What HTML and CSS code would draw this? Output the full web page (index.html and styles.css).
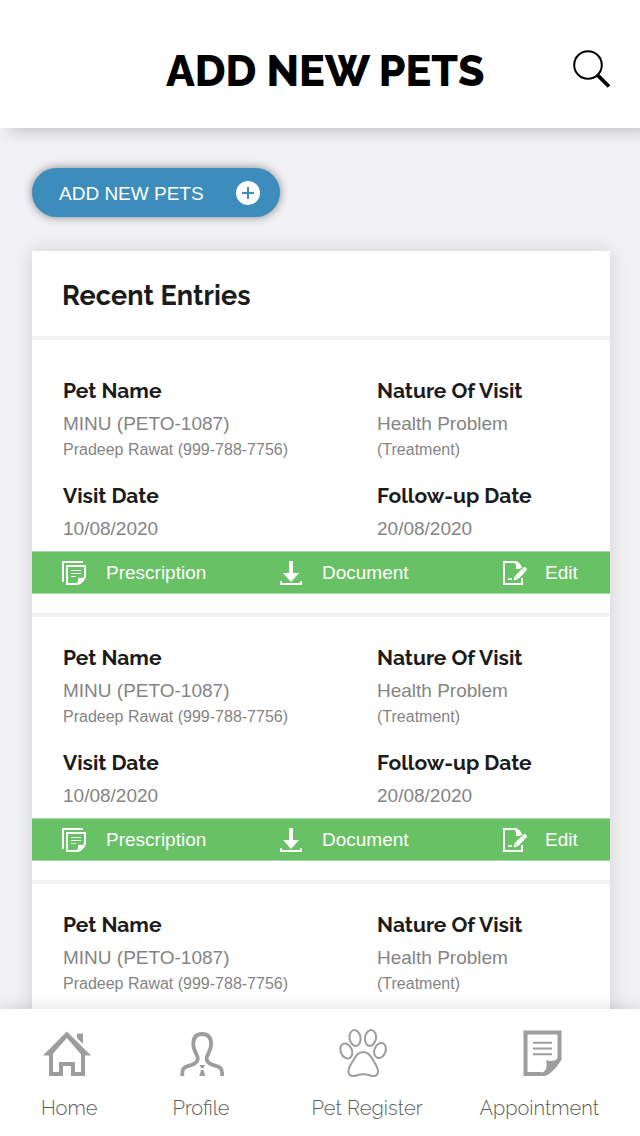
FILE: index.html
```html
<!DOCTYPE html>
<html lang="en">
<head>
<meta charset="utf-8">
<title>Add New Pets</title>
<link rel="stylesheet" href="styles.css">
</head>
<body>
<svg class="defs" width="0" height="0" aria-hidden="true">
  <symbol id="prescription" viewBox="0 0 24 24">
    <path d="M1 21V1h20" fill="none" stroke="currentColor" stroke-width="2"/>
    <path d="M23 17V5H5v18h11" fill="none" stroke="currentColor" stroke-width="2"/>
    <path d="M9 9.500h10M9 12.500h10M9 15.500h5" stroke="currentColor" stroke-width="1"/>
    <path d="M24 16c-1.500 4-4 6.500-8 8h-2v-2c2 0 2.500-2.500 2-5.500 2.500 1 4.500.5 6-.5z" fill="currentColor"/>
  </symbol>
  <symbol id="download" viewBox="0 0 22 24">
    <path d="M9 0h4v12h6l-8 9-8-9h6z" fill="currentColor"/>
    <path d="M1 20v3h20v-3" fill="none" stroke="currentColor" stroke-width="2"/>
  </symbol>
  <symbol id="edit" viewBox="0 0 24 24">
    <path d="M12 1H1v22h18v-6" fill="none" stroke="currentColor" stroke-width="2"/>
    <path d="M11 0h2c3 1 5.500 4 6 7-2 1-4 1-6 1 .5-3 0-5-2-6.500z" fill="currentColor"/>
    <path d="M21.500 6L24 8.500l-2 2L19.500 8zM18.700 8.700l2.700 2.700-6 6-2.700-2.700zM12 15.500l2.500 2.500-3.500 1z" fill="currentColor" stroke="currentColor" stroke-width=".9"/>
    <path d="M5 18h4" stroke="currentColor" stroke-width="1.600"/>
  </symbol>
</svg>
<div class="screen">
  <header class="header">
    <h1 class="title"><span>ADD NEW PETS</span></h1>
    <svg class="search" viewBox="0 0 38 38" width="38" height="38">
      <circle cx="15" cy="15" r="13.800" fill="none" stroke="#000" stroke-width="2"/>
      <path d="M24.500 25L36 36.500" stroke="#000" stroke-width="3.800"/>
    </svg>
  </header>
  <main class="main">
    <button class="add"><span>ADD NEW PETS</span>
      <svg viewBox="0 0 24 24" width="24" height="24"><circle cx="12" cy="12" r="12" fill="#fff"/><path d="M12 6v12M6 12h12" stroke="#3d8dbc" stroke-width="2"/></svg>
    </button>
    <section class="card">
      <h2 class="card-title"><span>Recent Entries</span></h2>
      <article class="entry">
        <div class="fields">
          <div class="col left">
            <h3>Pet Name</h3><p class="value">MINU (PETO-1087)</p><p class="small">Pradeep Rawat (999-788-7756)</p>
            <h3 class="second">Visit Date</h3><p class="value">10/08/2020</p>
          </div>
          <div class="col">
            <h3>Nature Of Visit</h3><p class="value">Health Problem</p><p class="small">(Treatment)</p>
            <h3 class="second">Follow-up Date</h3><p class="value">20/08/2020</p>
          </div>
        </div>
        <div class="actions">
          <a class="act a1"><svg width="24" height="24"><use href="#prescription"/></svg><span>Prescription</span></a>
          <a class="act a2"><svg width="22" height="24"><use href="#download"/></svg><span>Document</span></a>
          <a class="act a3"><svg width="24" height="24"><use href="#edit"/></svg><span>Edit</span></a>
        </div>
      </article>
      <article class="entry">
        <div class="fields">
          <div class="col left">
            <h3>Pet Name</h3><p class="value">MINU (PETO-1087)</p><p class="small">Pradeep Rawat (999-788-7756)</p>
            <h3 class="second">Visit Date</h3><p class="value">10/08/2020</p>
          </div>
          <div class="col">
            <h3>Nature Of Visit</h3><p class="value">Health Problem</p><p class="small">(Treatment)</p>
            <h3 class="second">Follow-up Date</h3><p class="value">20/08/2020</p>
          </div>
        </div>
        <div class="actions">
          <a class="act a1"><svg width="24" height="24"><use href="#prescription"/></svg><span>Prescription</span></a>
          <a class="act a2"><svg width="22" height="24"><use href="#download"/></svg><span>Document</span></a>
          <a class="act a3"><svg width="24" height="24"><use href="#edit"/></svg><span>Edit</span></a>
        </div>
      </article>
      <article class="entry">
        <div class="fields">
          <div class="col left">
            <h3>Pet Name</h3><p class="value">MINU (PETO-1087)</p><p class="small">Pradeep Rawat (999-788-7756)</p>
          </div>
          <div class="col">
            <h3>Nature Of Visit</h3><p class="value">Health Problem</p><p class="small">(Treatment)</p>
          </div>
        </div>
      </article>
    </section>
  </main>
  <nav class="nav">
    <a class="tab t1">
      <svg viewBox="0 0 48 48" width="48" height="48" fill="none" stroke="#9d9d9d" stroke-width="4">
        <path d="M8 22v22h10V34h12v10h10V22"/>
        <path d="M23.800 1.500L48 25.500h-9L23.800 8 8.500 25.500H0z" fill="#9d9d9d" stroke="none"/>
        <path d="M34 3.500h6V14l-6-6z" fill="#9d9d9d" stroke="none"/>
      </svg><span>Home</span></a>
    <a class="tab t2">
      <svg viewBox="0 0 48 48" width="48" height="48" fill="none" stroke="#9d9d9d" stroke-width="3.800">
        <path d="M5.300 46v-3c0-4.500 2-6 7-7.300 5-1.300 8.500-3 8.500-7.200 0-3.500-4.500-7.500-4.500-14.500C16.300 8 19 4 25.200 4s8.900 4 8.900 10c0 7-4.500 11-4.500 14.500 0 4.200 3.500 5.900 8.500 7.200s7 2.800 7 7.300v3"/>
        <path d="M22.500 35h5.500l-1.600 3.300h-2.300zM24 40h2.500l1.800 6h-6z" fill="#9d9d9d" stroke="none"/>
      </svg><span>Profile</span></a>
    <a class="tab t3">
      <svg viewBox="0 0 48 48" width="48" height="48" fill="none" stroke="#9d9d9d" stroke-width="2">
        <ellipse cx="16" cy="8" rx="5.500" ry="8" transform="rotate(-10 16 8)"/>
        <ellipse cx="31.500" cy="8" rx="5.500" ry="8" transform="rotate(10 31.500 8)"/>
        <ellipse cx="7.300" cy="21" rx="5.600" ry="7.800" transform="rotate(-24 7.300 21)"/>
        <ellipse cx="41" cy="20.500" rx="5.600" ry="7.800" transform="rotate(20 41 20.500)"/>
        <path d="M24.200 22c-5 0-7.200 4-9.700 8-2.500 4-5.300 7.500-5 12 .5 5 5 4.500 8.500 3.300 4-1.300 8.500-1.300 12.500 0 3.500 1.200 8 1.700 8.500-3.300.3-4.500-2.500-8-5-12-2.500-4-4.800-8-9.800-8z"/>
      </svg><span>Pet Register</span></a>
    <a class="tab t4">
      <svg viewBox="0 0 48 48" width="48" height="48" fill="none" stroke="#9d9d9d" stroke-width="4">
        <path d="M40.500 29V2.500H6.500V44h16"/>
        <path d="M14 12.800h19M14 18.600h19M14 24.200h19" stroke-width="2"/>
        <path d="M42.500 28v1.500c-4 7-9.500 13.500-16.500 16.500h-6v-3.500c6 1 9-4 7-12.500 4.500 2 10 1 11.500-2z" fill="#9d9d9d" stroke="none"/>
      </svg><span>Appointment</span></a>
  </nav>
</div>
</body>
</html>
```
FILE: styles.css
```css
* { box-sizing: border-box; margin: 0; padding: 0; }
body { background: #f1f1f4; font-family: "Liberation Sans", Arial, sans-serif; }
.defs { position: absolute; }
.screen { width: 640px; height: 1136px; display: flex; flex-direction: column; overflow: hidden; background: #f1f1f4; }
.header { height: 128px; flex: none; background: #fff; display: flex; align-items: center; padding: 9px 29px 0 166px; justify-content: space-between; box-shadow: 10px 3px 14px rgba(0,0,0,.2); z-index: 1; }
.title { font: 800 43px/52px Raleway, Lato, sans-serif; color: #000; white-space: nowrap; padding-top: 5px; }
.search { flex: none; }
.main { flex: 1; min-height: 0; padding: 40px 30px 0 32px; overflow: hidden; }
.add { display: flex; align-items: center; justify-content: space-between; width: 248px; height: 49px; border: 0; border-radius: 25px; background: #3d8dbc; color: #fff; font: 19px "Liberation Sans", Arial, sans-serif; padding: 1px 20px 0 27px; box-shadow: 0 0 10px rgba(0,0,0,.45); white-space: nowrap; }
.add span { padding-top: 1px; }
.card { margin-top: 34px; background: #fff; box-shadow: 0 0 18px rgba(0,0,0,.13); height: 900px; }
.card-title { height: 89px; border-bottom: 4px solid #f1f1f2; padding: 29px 0 0 30px; font: 700 27px/32px Raleway, Lato, sans-serif; letter-spacing: .08px; color: #1b1b1b; }
.entry { border-bottom: 4px solid #f1f1f3; padding: 29px 0 19px; height: 267px; }
.card-title + .entry { padding-top: 39px; height: 277px; }
.fields { display: flex; height: 172px; padding-left: 31px; white-space: nowrap; }
.left { width: 314px; }
h3 { font: 700 21px/24px Raleway, Lato, sans-serif; color: #1b1b1b; }
.second { margin-top: 24px; }
.value { margin-top: 9px; font-size: 19px; line-height: 24px; color: #848484; }
.small { margin-top: 4px; font-size: 16px; line-height: 20px; color: #848484; }
.actions { display: flex; height: 43px; background: #68c164; border: solid #a4daa2; border-width: 1px 0; color: #fff; align-items: center; padding: 1px 0 0 30px; font-size: 19px; }
.act { display: flex; align-items: center; white-space: nowrap; }
.a1 { width: 218px; gap: 20px; }
.a2 { width: 223px; gap: 20px; }
.a3 { gap: 18px; }
.nav { height: 127px; flex: none; background: #fff; z-index: 1; display: flex; padding: 21px 0 0 41px; box-shadow: 0 -2px 14px rgba(0,0,0,.12); }
.tab { display: flex; flex-direction: column; font: 300 20px/24px Raleway, Lato, sans-serif; color: #5b5b5b; white-space: nowrap; }
.tab svg { overflow: visible; }
.tab span { margin-top: 18px; }
.t1 { width: 131.500px; }
.t2 { width: 139px; }
.t3 { width: 168px; letter-spacing: .06px; }
.t1 svg { margin-left: 2px; }
.t2 svg { margin-left: 4.500px; }
.t3 svg { margin-left: 27.500px; }
.t4 svg { margin-left: 39.500px; }
```
